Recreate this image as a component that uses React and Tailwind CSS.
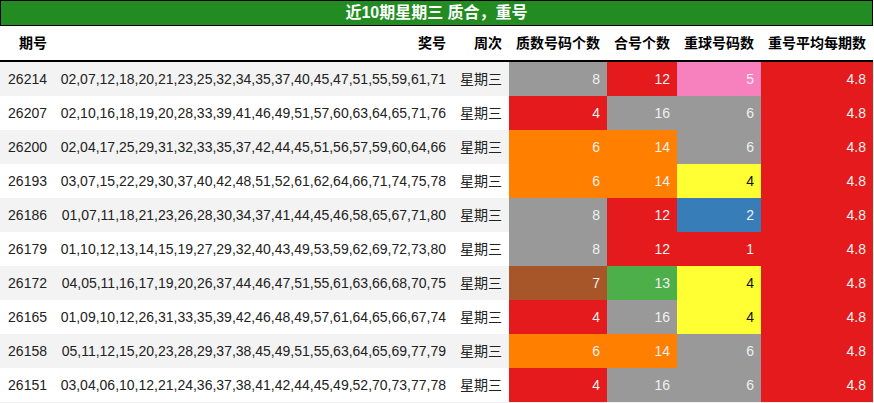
import React from "react";

// 配色 (Set1)
const C = {
  gray: "bg-[#999999] text-[#f0f0f0]",
  red: "bg-[#e41a1c] text-[#f0f0f0]",
  pink: "bg-[#f781bf] text-[#f0f0f0]",
  orange: "bg-[#ff7f00] text-[#f0f0f0]",
  yellow: "bg-[#ffff33] text-[#111111]",
  blue: "bg-[#377eb8] text-[#f0f0f0]",
  brown: "bg-[#a65628] text-[#f0f0f0]",
  green: "bg-[#4daf4a] text-[#f0f0f0]",
};

const rows = [
  ["26214", "02,07,12,18,20,21,23,25,32,34,35,37,40,45,47,51,55,59,61,71", [8, "gray"], [12, "red"], [5, "pink"]],
  ["26207", "02,10,16,18,19,20,28,33,39,41,46,49,51,57,60,63,64,65,71,76", [4, "red"], [16, "gray"], [6, "gray"]],
  ["26200", "02,04,17,25,29,31,32,33,35,37,42,44,45,51,56,57,59,60,64,66", [6, "orange"], [14, "orange"], [6, "gray"]],
  ["26193", "03,07,15,22,29,30,37,40,42,48,51,52,61,62,64,66,71,74,75,78", [6, "orange"], [14, "orange"], [4, "yellow"]],
  ["26186", "01,07,11,18,21,23,26,28,30,34,37,41,44,45,46,58,65,67,71,80", [8, "gray"], [12, "red"], [2, "blue"]],
  ["26179", "01,10,12,13,14,15,19,27,29,32,40,43,49,53,59,62,69,72,73,80", [8, "gray"], [12, "red"], [1, "red"]],
  ["26172", "04,05,11,16,17,19,20,26,37,44,46,47,51,55,61,63,66,68,70,75", [7, "brown"], [13, "green"], [4, "yellow"]],
  ["26165", "01,09,10,12,26,31,33,35,39,42,46,48,49,57,61,64,65,66,67,74", [4, "red"], [16, "gray"], [4, "yellow"]],
  ["26158", "05,11,12,15,20,23,28,29,37,38,45,49,51,55,63,64,65,69,77,79", [6, "orange"], [14, "orange"], [6, "gray"]],
  ["26151", "03,04,06,10,12,21,24,36,37,38,41,42,44,45,49,52,70,73,77,78", [4, "red"], [16, "gray"], [6, "gray"]],
];

const headers = ["期号", "奖号", "周次", "质数号码个数", "合号个数", "重球号码数", "重号平均每期数"];

const grid = "grid grid-cols-[54px_399px_56px_98px_70px_84px_112px]";
const cell = "h-[34px] flex items-center justify-end pr-[7px] whitespace-nowrap";

export default function App() {
  return (
    <div className="w-[873px] bg-white text-[14px] text-[#222222] font-['Liberation_Sans','Noto_Sans_CJK_SC',sans-serif]">
      <div className="h-[26px] bg-[#228b22] border border-black flex items-center justify-center text-white font-bold text-[16px]">
        近10期星期三 质合，重号
      </div>
      <div className={`${grid} border-b-2 border-black font-bold text-black`}>
        {headers.map((h) => (
          <div key={h} className={cell}>{h}</div>
        ))}
      </div>
      {rows.map(([issue, nums, a, b, c], i) => (
        <div key={issue} className={`${grid} ${i % 2 === 0 ? "bg-[#f3f3f3]" : "bg-white"}`}>
          <div className={cell}>{issue}</div>
          <div className={cell}>{nums}</div>
          <div className={cell}>星期三</div>
          <div className={`${cell} ${C[a[1]]}`}>{a[0]}</div>
          <div className={`${cell} ${C[b[1]]}`}>{b[0]}</div>
          <div className={`${cell} ${C[c[1]]}`}>{c[0]}</div>
          <div className={`${cell} ${C.red}`}>4.8</div>
        </div>
      ))}
      <div className="h-px bg-[#eeeeee]" />
    </div>
  );
}
